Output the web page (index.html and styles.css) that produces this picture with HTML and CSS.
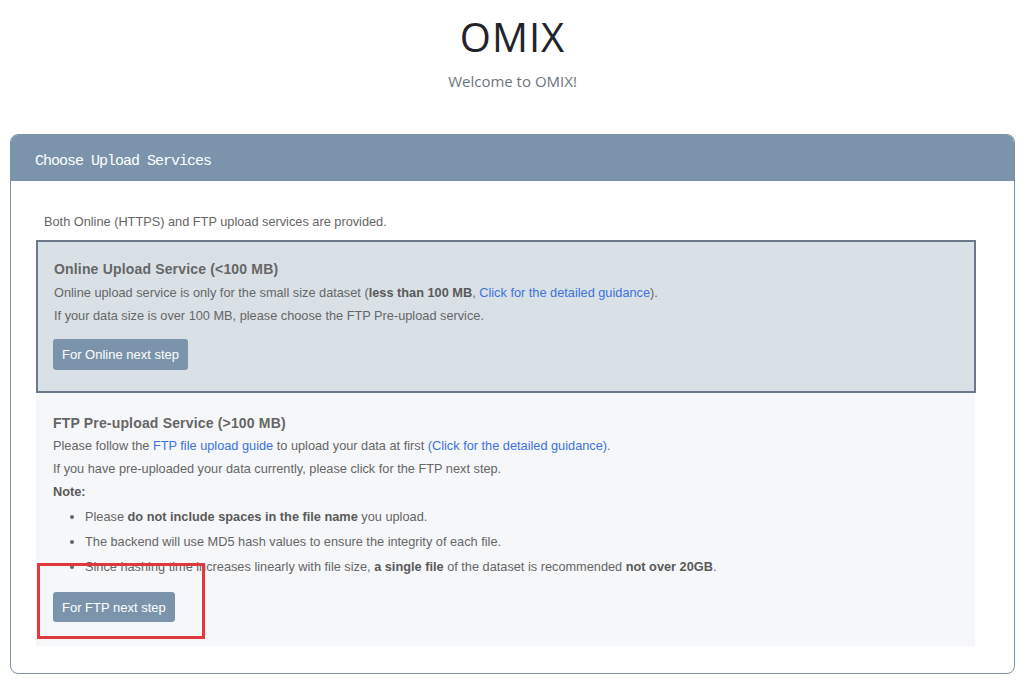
FILE: index.html
```html
<!DOCTYPE html>
<html lang="en">
  <head>
    <meta charset="utf-8">
    <title>OMIX</title>
    <link rel="stylesheet" href="styles.css">
  </head>
  <body>
    <header class="site-head">
      <h1 class="site-title">OMIX</h1>
      <p class="site-sub">Welcome to OMIX!</p>
    </header>

    <section class="card">
      <div class="card-head">Choose Upload Services</div>
      <div class="card-body">
        <p class="intro">Both Online (HTTPS) and FTP upload services are provided.</p>

        <div class="service service--online">
          <h3 class="service-title">Online Upload Service (&lt;100 MB)</h3>
          <p>Online upload service is only for the small size dataset (<b>less than 100 MB</b>, <a href="#">Click for the detailed guidance</a>).</p>
          <p>If your data size is over 100 MB, please choose the FTP Pre-upload service.</p>
          <button class="btn">For Online next step</button>
        </div>

        <div class="service service--ftp">
          <h3 class="service-title">FTP Pre-upload Service (&gt;100 MB)</h3>
          <p>Please follow the <a href="#">FTP file upload guide</a> to upload your data at first <a href="#">(Click for the detailed guidance)</a>.</p>
          <p>If you have pre-uploaded your data currently, please click for the FTP next step.</p>
          <p><b>Note:</b></p>
          <ul class="notes">
            <li>Please <b>do not include spaces in the file name</b> you upload.</li>
            <li>The backend will use MD5 hash values to ensure the integrity of each file.</li>
            <li>Since hashing time increases linearly with file size, <b>a single file</b> of the dataset is recommended <b>not over 20GB</b>.</li>
          </ul>
          <button class="btn">For FTP next step</button>
          <div class="highlight"></div>
        </div>
      </div>
    </section>
  </body>
</html>
```

FILE: styles.css
```css
body {
  margin: 0;
  padding: 10px 10px 0;
  background: #fff;
  font-family: "Liberation Sans", Arial, sans-serif;
  font-size: 12.75px;
  color: #666;
}

.site-head {
  text-align: center;
  padding-top: 4px;
  height: 124px;
  box-sizing: border-box;
}

.site-title {
  margin: 0;
  font-family: "Open Sans", sans-serif;
  font-weight: 400;
  font-size: 40px;
  line-height: 46px;
  color: #212529;
  letter-spacing: 1px;
}

.site-sub {
  margin: 11px 0 0;
  font-family: "Open Sans", sans-serif;
  font-size: 15px;
  color: #6c757d;
}

.card {
  border: 1px solid #7b94ab;
  border-radius: 8px;
  height: 540px;
  box-sizing: border-box;
  overflow: hidden;
}

.card-head {
  background: #7b94ab;
  color: #fff;
  font-family: "Liberation Mono", "DejaVu Sans Mono", monospace;
  font-size: 15px;
  letter-spacing: -1px;
  height: 46px;
  line-height: 53px;
  padding-left: 24px;
}

.card-body {
  padding: 32px 38px 0 25px;
}

.intro {
  margin: 0 0 9px 8px;
  line-height: 18px;
}

.service {
  padding: 16px 16px 0 16px;
  position: relative;
}

.service p,
.service-title {
  margin: 0;
  line-height: 23px;
}

.service-title {
  font-size: 14px;
  font-weight: bold;
  letter-spacing: 0.17px;
  color: #666;
}

.service b {
  color: #5a5a5a;
}

.service a {
  color: #3d72de;
  text-decoration: none;
}

.service--online {
  background: #d9e1e6;
  border: 2px solid #6b7889;
  height: 153px;
  box-sizing: border-box;
}

.service--ftp {
  background: #f5f7f9;
  height: 253px;
  box-sizing: border-box;
  margin-right: 1px;
  padding-top: 19px;
  padding-left: 17px;
}

.service--ftp .service-title {
  margin-bottom: -1px;
}

.notes {
  margin: 1px 0 0;
  padding-left: 32px;
}

.notes li {
  line-height: 25px;
}

.btn {
  display: block;
  margin-top: 12px;
  margin-left: -1px;
  background: #7b94ab;
  color: #fff;
  border: 0;
  border-radius: 3px;
  font-family: "Liberation Sans", Arial, sans-serif;
  font-size: 13px;
  height: 31px;
  padding: 0 9px;
}

.service--ftp .btn {
  margin-top: 13px;
  margin-left: 0;
  height: 30px;
}

.highlight {
  position: absolute;
  left: 1px;
  top: 170px;
  width: 162px;
  height: 70px;
  border: 3px solid #e0393d;
}
```
